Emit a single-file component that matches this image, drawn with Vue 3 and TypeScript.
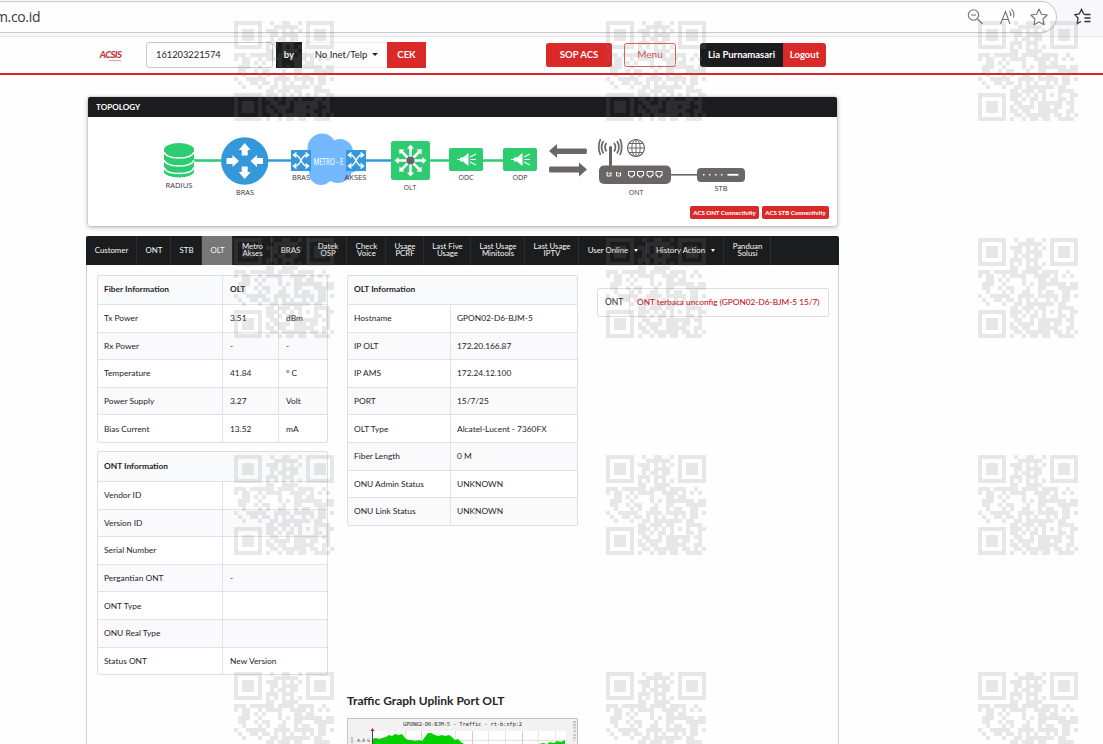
<script setup lang="ts">
interface NavItem { label: string; width: number; active?: boolean; caret?: boolean }

const nav: NavItem[] = [
  { label: 'Customer', width: 51 },
  { label: 'ONT', width: 34 },
  { label: 'STB', width: 31 },
  { label: 'OLT', width: 31, active: true },
  { label: 'Metro\nAkses', width: 39 },
  { label: 'BRAS', width: 37 },
  { label: 'Datek\nOSP', width: 38 },
  { label: 'Check\nVoice', width: 39 },
  { label: 'Usage\nPCRF', width: 38 },
  { label: 'Last Five\nUsage', width: 47 },
  { label: 'Last Usage\nMinitools', width: 54 },
  { label: 'Last Usage\nIPTV', width: 54 },
  { label: 'User Online', width: 68, caret: true },
  { label: 'History Action', width: 77, caret: true },
  { label: 'Panduan\nSolusi', width: 47 },
]

const fiber: string[][] = [
  ['Tx Power', '3.51', 'dBm'],
  ['Rx Power', '-', '-'],
  ['Temperature', '41.84', '° C'],
  ['Power Supply', '3.27', 'Volt'],
  ['Bias Current', '13.52', 'mA'],
]
const ont: string[][] = [
  ['Vendor ID', ''],
  ['Version ID', ''],
  ['Serial Number', ''],
  ['Pergantian ONT', '-'],
  ['ONT Type', ''],
  ['ONU Real Type', ''],
  ['Status ONT', 'New Version'],
]
const olt: string[][] = [
  ['Hostname', 'GPON02-D6-BJM-5'],
  ['IP OLT', '172.20.166.87'],
  ['IP AMS', '172.24.12.100'],
  ['PORT', '15/7/25'],
  ['OLT Type', 'Alcatel-Lucent - 7360FX'],
  ['Fiber Length', '0 M'],
  ['ONU Admin Status', 'UNKNOWN'],
  ['ONU Link Status', 'UNKNOWN'],
]

const qr: string[] = [
  '#######..#..##..#.#######',
  '#.....#...######..#.....#',
  '#.###.#.###.#.#.#.#.###.#',
  '#.###.#..##.####..#.###.#',
  '#.###.#..#.##.##..#.###.#',
  '#.....#.###.###...#.....#',
  '#######.#.#.#.#.#.#######',
  '........##..####.........',
  '###.######.####.####..#..',
  '#.##..#.####..####.#.#.#.',
  '..##.#.#...#...##.##.....',
  '.###..#....#.#.#######.##',
  '.##..#.##...#..##...#####',
  '..#...#.#..##..#.##..##..',
  '#..#####..####.#####.##.#',
  '.#..##.##.#.#.#..#.#.##..',
  '..#...#..##.#######.##...',
  '........##.###.##...####.',
  '#######.###.#.#.#.#.#..##',
  '#.....#.##.#.##.#...##.#.',
  '#.###.#..##..#.######.##.',
  '#.###.#.#.####.###.##..#.',
  '#.###.#.##.##..#####..##.',
  '#.....#..##.######.##.#.#',
  '#######.#..#.##.##..####.',
]
const qrPath = qr.map((row, y) =>
  [...row].map((c, x) => (c === '#' ? `M${x} ${y}h1v1h-1z` : '')).join('')).join('')
const marks = [21, 238, 455, 672].flatMap(y => [234, 606, 978].map(x => ({ x, y })))
const spokes = [0, 45, 90, 135, 180, 225, 270, 315]
const labels = [
  { t: 'RADIUS', x: 179, y: 187.5, w: 27 },
  { t: 'BRAS', x: 245, y: 194.5, w: 18 },
  { t: 'BRAS', x: 301, y: 179.8, w: 18 },
  { t: 'AKSES', x: 355.5, y: 179.8, w: 22 },
  { t: 'OLT', x: 410, y: 190, w: 12.5 },
  { t: 'ODC', x: 466, y: 180.3, w: 15 },
  { t: 'ODP', x: 520, y: 180.3, w: 15 },
  { t: 'ONT', x: 636, y: 194.5, w: 14.5 },
  { t: 'STB', x: 721, y: 191, w: 13 },
]
</script>

<template>
  <div class="screen">
    <div class="browser">
      <div class="address">
        <span class="url">m.co.id</span>
        <svg class="tools" width="84" height="24" viewBox="0 0 84 24" fill="none" stroke="#707073" stroke-width="1.1">
          <circle cx="6.500" cy="10" r="5.200" /><path d="M4 10h5M10.500 14l5 5" />
          <path d="M33.500 19 38.500 6.500l4.500 12.500M35.500 14.500h6M42.500 6q2 2.500 1 5M44.500 4q3.500 4 2 8.500" />
          <path d="m72 4 2.500 5.200 5.700.8-4.200 4 1 5.800-5-2.800-5 2.800 1-5.800-4.200-4 5.700-.8z" stroke-linejoin="round" />
        </svg>
      </div>
      <svg class="fav" width="18" height="18" viewBox="0 0 18 18" fill="none" stroke="#303034" stroke-width="1.3">
        <path d="M11.500 6.500 9.800 6 7.500 1.500 5.200 6 .8 6.700 4 10l-.8 5.500 3.800-2M10.500 6.500h6M10.500 10h6M10.500 13.500h6" />
      </svg>
    </div>

    <header class="header">
      <div class="logo">ACSIS<i></i></div>
      <div class="field">161203221574</div>
      <div class="by">by</div>
      <div class="select">No Inet/Telp<b class="caret"></b></div>
      <div class="btn cek">CEK</div>
      <div class="btn sop">SOP ACS</div>
      <div class="btn menu">Menu</div>
      <div class="btn user">Lia Purnamasari</div>
      <div class="btn logout">Logout</div>
    </header>

    <section class="topology">
      <h2>TOPOLOGY</h2>
      <svg class="diagram" width="749" height="109" viewBox="88 117 749 109">
        <path d="M194 160.500h28" stroke="#2ecc71" stroke-width="2.600" />
        <path d="M267 160.500h25M366 160.500h26" stroke="#3498db" stroke-width="2.600" />
        <path d="M429 160.500h21M482 160.500h22" stroke="#2ecc71" stroke-width="2.600" />
        <g fill="#2ecc71">
          <path d="M164 149v22.500a15 6 0 0 0 30 0V149z" /><ellipse cx="179" cy="149.500" rx="15" ry="6.500" />
        </g>
        <path d="M164 152q2 6 15 6t15-6M164 160q2 6 15 6t15-6M164 167.500q2 6 15 6t15-6" fill="none" stroke="#fff" stroke-width="1.500" />
        <circle cx="244.700" cy="161" r="23.700" fill="#3498db" />
        <g fill="#fff">
          <path v-for="a in [0, 180]" :key="a" :transform="`rotate(${a} 244.700 161)`" d="m244.700 143 6 7h-3v5.500h-6V150h-3z" />
          <path d="m239 161-6.500-6v3h-6v6h6v3zM250.500 161l6.500-6v3h6v6h-6v3z" />
        </g>
        <g fill="#74b9ff">
          <circle cx="322" cy="148" r="14.500" /><circle cx="340" cy="152" r="13" /><circle cx="314" cy="163" r="10" />
          <circle cx="321" cy="173" r="12" /><circle cx="338" cy="169" r="14" /><circle cx="350" cy="163" r="10" />
        </g>
        <g v-for="x in [291, 346]" :key="x" :transform="`translate(${x} 150)`">
          <path d="M0 0h20v21H0z" fill="#3498db" />
          <path d="M3 5h2c4 0 6 11 10 11h2M3 16h2c4 0 6-11 10-11h2M14.500 2.500 17.500 5l-3 2.500M14.500 13.500l3 2.500-3 2.500M5.500 2.500 2.500 5l3 2.500M5.500 13.500l-3 2.500 3 2.500" fill="none" stroke="#fff" stroke-width="1.500" />
        </g>
        <text x="328.500" y="164.500" text-anchor="middle" textLength="30" lengthAdjust="spacingAndGlyphs" class="metro">METRO - E</text>
        <rect x="391" y="141" width="39" height="39" rx="2.500" fill="#2ecc71" />
        <g fill="#fff">
          <path v-for="a in spokes" :key="a" :transform="`rotate(${a} 410.500 160.500)`" d="M409.200 160.500v-12h-2.200l3.500-4 3.500 4h-2.200v12z" />
        </g>
        <circle cx="410.500" cy="160.500" r="4" fill="#646464" />
        <g v-for="x in [449, 503]" :key="x" :transform="`translate(${x} 148)`">
          <rect width="34" height="23" rx="2" fill="#2ecc71" />
          <path d="M11 9.500h3l5.500-4.500v13L14 13.500h-3z" fill="#fff" />
          <path d="M8 11.500h3M21 9l6-3M21.500 11.500H27M21 14l6 3" stroke="#fff" stroke-width="1.100" />
        </g>
        <g fill="#6b6666">
          <path d="m549 151 8-7v4.500h29q1 0 1 2.500t-1 3h-29v4zM587 169.500l-8-7v4h-29q-1 0-1 2.500 0 3.500 1 3.500h29v4z" />
          <rect x="599" y="165.500" width="72" height="18.500" rx="5" />
          <path d="M609 147q1.500-2 3 0v20h-3z" />
          <rect x="697" y="168" width="48" height="14" rx="4" />
          <path d="M670 174h28v1.600h-28z" />
        </g>
        <g fill="none" stroke="#6b6666" stroke-width="1.700">
          <path d="M606.500 143q-3 4 0 8.500M603.500 141q-4 6 0 12.500M600.500 139q-3.500 8 0 16M614 143q3 4 0 8.500M617 141q4 6 0 12.500M620 139q3.500 8 0 16" />
          <circle cx="636" cy="148" r="8.500" stroke-width="1.200" /><ellipse cx="636" cy="148" rx="4.200" ry="8.500" stroke-width="1" />
          <path d="M636 139.500v17M627.500 148h17M629 143.500h14M629 152.500h14" stroke-width="1" />
        </g>
        <g fill="none" stroke="#fff" stroke-width="1">
          <path v-for="x in [607, 616.500]" :key="x" :d="`M${x} 172.500h1l1 1h1l1-1v3.500h-4z`" />
          <path v-for="x in [628.500, 637.500, 647, 656]" :key="x" :d="`M${x} 171.500h6v4h-1.500v1.500h-3v-1.500h-1.500z`" />
          <path d="M703 174.800h20" stroke-width="1.500" stroke-dasharray="1.500 4.500" /><path d="M727.500 174.800h11" stroke-width="1.800" />
        </g>
        <text v-for="l in labels" :key="l.x" class="label" :x="l.x" :y="l.y" :textLength="l.w" lengthAdjust="spacingAndGlyphs">{{ l.t }}</text>
      </svg>
      <div class="acs"><span>ACS ONT Connectivity</span><span>ACS STB Connectivity</span></div>
    </section>

    <nav class="nav">
      <div v-for="n in nav" :key="n.label" class="item" :class="{ active: n.active, double: n.label.includes('\n') }" :style="{ width: n.width + 'px' }">
        <span>{{ n.label }}</span><b v-if="n.caret" class="caret"></b>
      </div>
    </nav>

    <main class="content">
      <div class="col">
        <div class="table fiber">
          <div class="row head"><div>Fiber Information</div><div>OLT</div></div>
          <div v-for="r in fiber" :key="r[0]" class="row"><div v-for="(c, i) in r" :key="i">{{ c }}</div></div>
        </div>
        <div class="table ont">
          <div class="row head"><div>ONT Information</div></div>
          <div v-for="r in ont" :key="r[0]" class="row"><div v-for="(c, i) in r" :key="i">{{ c }}</div></div>
        </div>
      </div>
      <div class="col">
        <div class="table olt">
          <div class="row head"><div>OLT Information</div></div>
          <div v-for="r in olt" :key="r[0]" class="row"><div v-for="(c, i) in r" :key="i">{{ c }}</div></div>
        </div>
        <h3>Traffic Graph Uplink Port OLT</h3>
        <svg class="graph" width="231" height="26" viewBox="0 0 231 26">
          <path d="M0 0h231v48H0z" fill="#f2f2f2" /><path d="M.5 48V.5h230V48" fill="none" stroke="#c4c4c4" />
          <path d="M25 13h194v35H25z" fill="#fff" />
          <path d="M25 22.500h194" stroke="#e2e2e2" />
          <path d="M41.500 13v35M58.500 13v35M91.500 13v35M108.500 13v35M141.500 13v35M158.500 13v35M191.500 13v35M208.500 13v35" stroke="#e8e4e4" />
          <path d="M74.500 13v35M125.500 13v35M175.500 13v35" stroke="#f0bcbc" />
          <path d="M25 48V21l4-1 3 1 3-1 4-1 3-2 3 1 3-2 4 1 3-1 3 4 3 2 4 0 3 1 4-1 3 1 3-4 3-4 3 0 4 2 3 1 4-1 3 1 4-1 3 2 3 3 3-1 3 3 3 2 3 4v20z" fill="#00cf00" />
          <path d="M192 48V26l4-1 4 1 3-2 4 1 3-2 4 1 4-2v26z" fill="#00cf00" />
          <path d="M25.500 12v36" stroke="#444" /><path d="m23.500 13 2-3 2 3z" fill="#a22" />
          <text x="56" y="7.800" textLength="119" class="mono">GPON02-D6-BJM-5 - Traffic - rt-b:xfp:2</text>
          <text x="10" y="24" textLength="13" class="mono tiny">4.0 G</text>
          <text transform="translate(6 25.500) rotate(-90)" textLength="7" class="mono faint">oad</text>
          <text transform="translate(226 3) rotate(90)" textLength="21" class="mono faint">RRDTOOL</text>
        </svg>
      </div>
      <div class="col">
        <div class="notice"><span>ONT</span><strong>ONT terbaca unconfig (GPON02-D6-BJM-5 15/7)</strong></div>
      </div>
    </main>

    <svg class="watermark" width="1103" height="744" viewBox="0 0 1103 744" shape-rendering="crispEdges">
      <path v-for="m in marks" :key="`${m.x}-${m.y}`" :transform="`translate(${m.x} ${m.y}) scale(4)`" :d="qrPath" />
    </svg>
  </div>
</template>

<style>
body { margin: 0; background: #fefefe; overflow: hidden; }
</style>

<style scoped>
* { box-sizing: border-box; }
.screen { position: relative; width: 1103px; height: 744px; overflow: hidden; background: #fefefe; color: #252528; font-family: Lato, "Open Sans", sans-serif; font-size: 9px; }
.browser { height: 37px; background: #f8f7fa; border-bottom: 1px solid #e6e5e8; display: flex; padding-top: 1px; }
.address { width: 1057px; height: 32px; border: 1px solid #c9c9cc; border-left: 0; border-radius: 0 16px 16px 0; background: #fefdff; display: flex; justify-content: space-between; align-items: center; padding-right: 5px; }
.url { font: 14px "Open Sans", sans-serif; letter-spacing: -.35px; margin-left: -5px; padding-bottom: 1px; color: #39393c; }
.fav { margin: 7px 0 0 17px; }
.header { height: 38px; border-bottom: 2px solid #d9242b; display: flex; align-items: center; font-size: 9.500px; padding: 0 0 1px 99px; }
.header > div { flex: none; display: flex; align-items: center; justify-content: center; white-space: nowrap; padding-bottom: 1px; }
.logo { width: 23px; height: 18px; font: italic 900 9.500px Lato, sans-serif; letter-spacing: -.6px; color: #c4383c; position: relative; }
.logo i { position: absolute; right: 1px; bottom: 3px; width: 12px; height: 1px; background: #cfa2a2; }
.header .field { width: 127px; height: 26px; margin-left: 24px; padding-left: 9px; border: 1px solid #c8c8cb; border-radius: 3px; justify-content: flex-start; font-size: 9.300px; }
.by { width: 26px; height: 26px; margin-left: 3px; background: #1b1c1d; color: #fff; font-weight: 700; }
.select { width: 82px; height: 26px; margin-left: 3px; border: 1px solid #eee; border-right: 0; gap: 5px; }
.caret { width: 0; height: 0; border: 2.500px solid transparent; border-top: 3px solid currentColor; border-bottom: 0; }
.select .caret { border-width: 3px 3px 0; }
.btn { height: 24px; background: #db2828; color: #fff; font-weight: 700; border-radius: 2.500px; }
.cek { width: 39px; height: 26px; border-radius: 0; font-size: 9.500px; }
.sop { width: 66px; margin-left: 120px; }
.menu { width: 52px; margin-left: 12px; background: #fff; border: 1px solid #df5d58; color: #d2504e; font-weight: 400; font-size: 10px; }
.user { width: 83px; margin-left: 24px; background: #1b1c1d; border-radius: 3px 0 0 3px; font-size: 9.500px; }
.logout { width: 43px; border-radius: 0 3px 3px 0; font-size: 9.500px; }
.topology { width: 749px; height: 129px; margin: 22px 0 0 88px; background: #fff; border-radius: 2px; box-shadow: 0 1px 5px #0005, 0 0 1px #0007; position: relative; }
.topology h2 { height: 20px; margin: 0; padding-left: 8px; line-height: 20px; background: #1c1c1e; color: #fff; border-radius: 2px 2px 0 0; font-size: 8.100px; }
.diagram { display: block; }
.label { font: 7.800px "Open Sans", sans-serif; text-anchor: middle; fill: #333; }
.metro { font: 9px "Noto Sans", sans-serif; fill: #fff; }
.acs { position: absolute; right: 8px; bottom: 7px; display: flex; gap: 3px; }
.acs span { height: 13px; line-height: 13px; width: 67px; text-align: center; border-radius: 2px; background: #db2828; color: #fff; font-weight: 900; font-size: 6.100px; }
.acs span:first-child { width: 69px; }
.nav { width: 753px; height: 29px; margin: 10px 0 0 86px; background: #1b1c1d; border-radius: 2px 2px 0 0; display: flex; }
.item { height: 29px; flex: none; display: flex; align-items: center; justify-content: center; gap: 6px; color: #f8f8f8; border-right: 1px solid #2b2c2d; font-size: 7.800px; line-height: 7px; white-space: pre; text-align: center; padding-left: 1px; }
.item.double { padding-bottom: 2px; }
.item.active { background: #777; }
.content { width: 753px; height: 479px; margin-left: 86px; padding: 10px; border: solid #d4d4d5; border-width: 0 1px; display: flex; gap: 19px; }
.col { width: 231px; flex: none; }
.table { border: 1px solid #dedde1; border-radius: 2px; background: #fff; overflow: hidden; font-size: 8.400px; }
.row { height: 27.600px; display: grid; border-top: 1px solid #e2e1e5; }
.row:first-child { height: 28px; border-top: 0; }
.row:nth-child(odd) { background: #faf9fc; }
.row > div { display: flex; align-items: center; padding-left: 7px; border-left: 1px solid #e2e1e5; white-space: nowrap; }
.row > div:first-child { border-left: 0; padding-left: 6px; }
.row.head { font-weight: 700; font-size: 8.400px; background: #f9fafb; }
.row.head > div { padding-bottom: 2px; }
.fiber .row { grid-template-columns: 124px 56px 1fr; }
.fiber .row.head { grid-template-columns: 124px 1fr; }
.ont { margin-top: 8px; }
.ont .row { grid-template-columns: 124px 1fr; }
.ont .row.head { height: 29px; }
.ont .row.head > div { padding-bottom: 0; }
.olt .row { grid-template-columns: 102px 1fr; }
.olt .row > div + div { padding-left: 6px; font-size: 8.350px; }
h3 { height: 18px; margin: 166px 0 8px; font: 700 12px/18px Lato, sans-serif; white-space: nowrap; }
.graph { display: block; }
.mono { font: 5.500px "DejaVu Sans Mono", monospace; fill: #333; }
.tiny { font-size: 4.500px; }
.faint { font-size: 4px; fill: #999; }
.notice { width: 232px; height: 29px; margin-top: 13px; border: 1px solid #dedde1; border-radius: 2px; display: flex; align-items: stretch; font-size: 8.300px; white-space: nowrap; }
.notice span, .notice strong { display: flex; align-items: center; padding: 0 0 1px 7px; }
.notice span { flex: none; width: 32px; border-right: 1px solid #e5e4e8; font-size: 8.500px; }
.notice strong { color: #c5000c; font-weight: 400; }
.watermark { position: absolute; inset: 0; fill: #808080; fill-opacity: .18; pointer-events: none; }
</style>
